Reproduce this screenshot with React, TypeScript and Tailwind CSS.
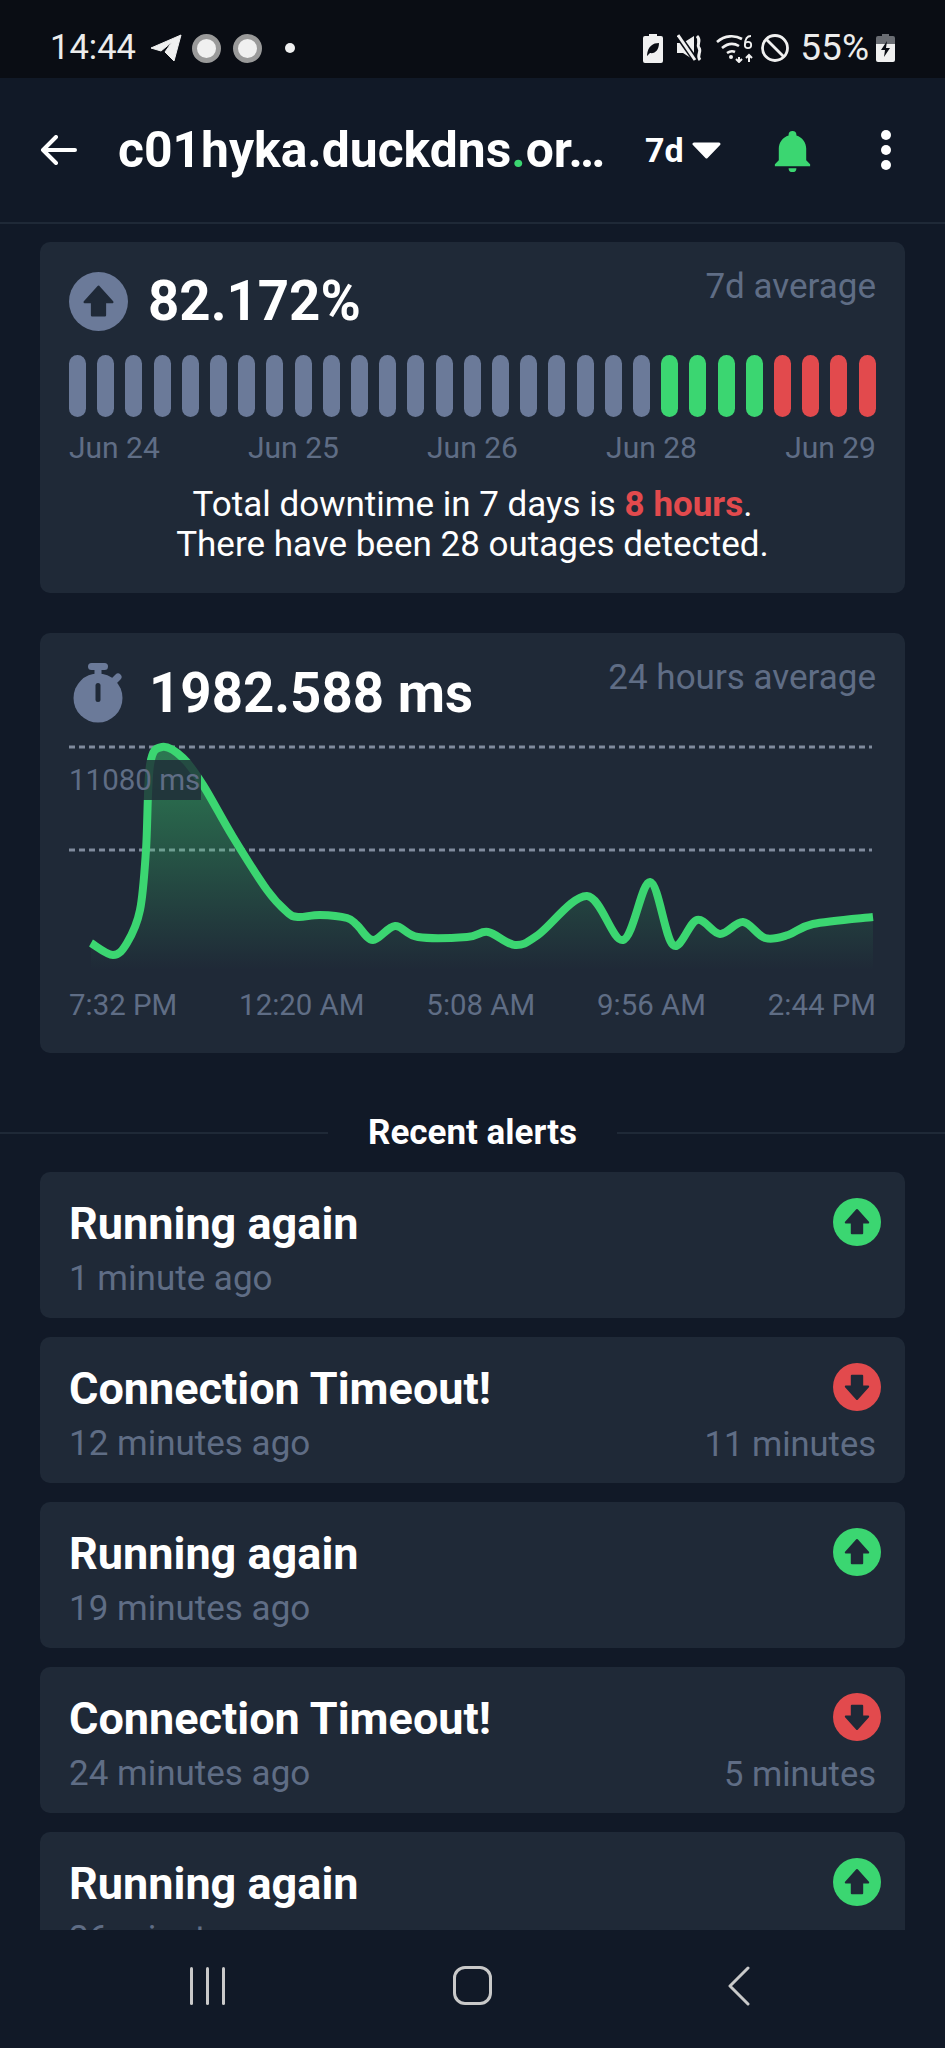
import React from 'react';

const GREEN = '#3bd671';
const RED = '#e24a4d';

// points traced from the reference, relative to the chart box
const points: [number, number][] = [
  [91, 943], [113, 955], [127, 943], [140, 910], [146, 850], [150, 765], [162, 747], [183, 758],
  [203, 785], [233, 837], [267, 890], [287, 912], [298, 917], [320, 915], [347, 918], [357, 925],
  [373, 940], [395, 926], [418, 937], [467, 937], [488, 932], [515, 945], [538, 935], [587, 896],
  [623, 940], [650, 882], [673, 945], [697, 920], [720, 934], [743, 922], [765, 938], [788, 935],
  [813, 924], [873, 917],
].map(([x, y]) => [x - 69, y - 740] as [number, number]);

const buildLine = (pts: [number, number][]) => {
  let d = `M${pts[0][0]} ${pts[0][1]}`;
  for (let i = 0; i < pts.length - 1; i++) {
    const p0 = pts[Math.max(i - 1, 0)];
    const p1 = pts[i];
    const p2 = pts[i + 1];
    const p3 = pts[Math.min(i + 2, pts.length - 1)];
    const c1x = p1[0] + (p2[0] - p0[0]) / 6;
    const c1y = p1[1] + (p2[1] - p0[1]) / 6;
    const c2x = p2[0] - (p3[0] - p1[0]) / 6;
    const c2y = p2[1] - (p3[1] - p1[1]) / 6;
    d += ` C${c1x} ${c1y} ${c2x} ${c2y} ${p2[0]} ${p2[1]}`;
  }
  return d;
};

const linePath = buildLine(points);
const areaPath = `${linePath} L804 230 L22 230 Z`;

const bars = [
  ...Array(21).fill('bg-[#6b7a99]'),
  ...Array(4).fill('bg-[#3bd671]'),
  ...Array(4).fill('bg-[#e24a4d]'),
];

const alerts = [
  { title: 'Running again', ago: '1 minute ago', up: true, length: '' },
  { title: 'Connection Timeout!', ago: '12 minutes ago', up: false, length: '11 minutes' },
  { title: 'Running again', ago: '19 minutes ago', up: true, length: '' },
  { title: 'Connection Timeout!', ago: '24 minutes ago', up: false, length: '5 minutes' },
  { title: 'Running again', ago: '26 minutes ago', up: true, length: '' },
];

const ArrowBadge: React.FC<{ up: boolean; color: string; size: string }> = ({ up, color, size }) => (
  <svg viewBox="0 0 24 24" className={size}>
    <circle cx="12" cy="12" r="12" fill={color} />
    <path
      d={up ? 'M12 6 L17.6 12.2 H14.6 V17.6 H9.4 V12.2 H6.4 Z' : 'M12 18 L17.6 11.8 H14.6 V6.4 H9.4 V11.8 H6.4 Z'}
      fill="#1f2937"
      stroke="#1f2937"
      strokeWidth="1"
      strokeLinejoin="round"
    />
  </svg>
);

const StatusBar = () => (
  <div className="h-[78px] bg-[#0a0d14] flex items-center justify-between pl-[50px] pr-[50px] pt-[18px] text-[#ececec] font-normal">
    <div className="flex items-center">
      <span className="text-[34.5px]">14:44</span>
      <svg viewBox="0 0 32 28" className="w-[32px] h-[28px] ml-[14px]">
        <path d="M1 14 L31 1 L24 27 L15 18 L22 8 L11 17 Z" fill="#f0f0f0" stroke="#f0f0f0" strokeLinejoin="round" />
      </svg>
      <span className="w-[29px] h-[29px] rounded-full bg-[#f0f0f0] border-[5px] border-[#9a9a9a] ml-[10px]" />
      <span className="w-[29px] h-[29px] rounded-full bg-[#f0f0f0] border-[5px] border-[#9a9a9a] ml-[12px]" />
      <span className="w-[10px] h-[10px] rounded-full bg-[#f0f0f0] ml-[23px]" />
    </div>
    <div className="flex items-center">
      <svg viewBox="0 0 20 29" className="w-[20px] h-[29px]">
        <path d="M6 0 H14 V2 H18 A2 2 0 0 1 20 4 V27 A2 2 0 0 1 18 29 H2 A2 2 0 0 1 0 27 V4 A2 2 0 0 1 2 2 H6 Z" fill="#f0f0f0" />
        <path d="M4 21 C5 12 10 9 16 9 C16 16 12 20 7 19 L4 22 Z" fill="#0a0d14" />
      </svg>
      <svg viewBox="0 0 26 28" className="w-[26px] h-[28px] ml-[14px]">
        <path d="M0 9 H6 L17 2 V26 L6 19 H0 Z" fill="#f0f0f0" />
        <path d="M0 0 L19 27" stroke="#0a0d14" strokeWidth="6" />
        <path d="M1 1 L18 26" stroke="#f0f0f0" strokeWidth="3" />
        <path d="M20 2 C25 7 19 10 22 14 C25 18 19 21 23 26" stroke="#f0f0f0" strokeWidth="3" fill="none" />
      </svg>
      <svg viewBox="0 0 39 30" className="w-[39px] h-[30px] ml-[13px]">
        <path d="M1 9 C9 2 19 2 26 6 M6 15 C12 10 18 10 23 13 M11 20 C14 18 17 18 19 19" stroke="#f0f0f0" strokeWidth="2.6" fill="none" />
        <circle cx="15" cy="24" r="2" fill="#f0f0f0" />
        <path d="M23 24 V29 M20 26 L23 29 L26 26 M33 29 V22 M30 25 L33 22 L36 25" stroke="#f0f0f0" strokeWidth="2" fill="none" />
        <circle cx="32" cy="12" r="3.2" stroke="#f0f0f0" strokeWidth="1.8" fill="none" />
        <path d="M35 3 C31 3 29 6 29 12" stroke="#f0f0f0" strokeWidth="1.8" fill="none" />
      </svg>
      <svg viewBox="0 0 28 28" className="w-[28px] h-[28px] ml-[6px]">
        <circle cx="14" cy="14" r="12.5" stroke="#f0f0f0" strokeWidth="2.8" fill="none" />
        <path d="M5 5 L23 23" stroke="#f0f0f0" strokeWidth="2.8" />
      </svg>
      <span className="ml-[11px] text-[37px]">55%</span>
      <svg viewBox="0 0 19 28" className="w-[19px] h-[28px] ml-[7px]">
        <path d="M6 0 H13 V2 H17 A2 2 0 0 1 19 4 V10 H0 V4 A2 2 0 0 1 2 2 H6 Z" fill="#6a6d73" />
        <path d="M0 10 H19 V26 A2 2 0 0 1 17 28 H2 A2 2 0 0 1 0 26 Z" fill="#f0f0f0" />
        <path d="M11 7 L5 16 H9 L8 23 L14 14 H10 Z" fill="#0a0d14" />
      </svg>
    </div>
  </div>
);

const Header = () => (
  <div className="h-[146px] bg-[#111927] border-b-2 border-[#1f2937] flex items-center pl-[40px] text-white">
    <svg viewBox="0 0 37 30" className="w-[37px] h-[30px] shrink-0">
      <path d="M35 15 H3 M16 2 L3 15 L16 28" stroke="#fff" strokeWidth="4" strokeLinecap="round" strokeLinejoin="round" fill="none" />
    </svg>
    <div className="ml-[41px] w-[490px] shrink-0 text-[49.8px] font-bold whitespace-nowrap overflow-hidden">
      c01hyka.duckdns<span className="text-[#3bd671]">.</span>or…
    </div>
    <div className="ml-[37px] text-[34px] font-bold w-[38px]">7d</div>
    <svg viewBox="0 0 29 17" className="w-[29px] h-[17px] ml-[9px]">
      <path d="M2 2 H27 L14.5 15 Z" fill="#fff" stroke="#fff" strokeWidth="3" strokeLinejoin="round" />
    </svg>
    <svg viewBox="0 0 24 24" className="w-[47px] h-[47px] ml-[48px]">
      <path
        d="M21,19V20H3V19L5,17V11C5,7.9 7.03,5.17 10,4.29C10,4.19 10,4.1 10,4A2,2 0 0,1 12,2A2,2 0 0,1 14,4C14,4.1 14,4.19 14,4.29C16.97,5.17 19,7.9 19,11V17L21,19M14,21A2,2 0 0,1 12,23A2,2 0 0,1 10,21"
        fill={GREEN}
      />
    </svg>
    <div className="ml-[65px] flex flex-col gap-[5px]">
      <span className="w-[10px] h-[10px] rounded-full bg-white" />
      <span className="w-[10px] h-[10px] rounded-full bg-white" />
      <span className="w-[10px] h-[10px] rounded-full bg-white" />
    </div>
  </div>
);

const UptimeCard = () => (
  <div className="h-[351px] bg-[#1f2937] rounded-[10px] px-[29px] pt-[30px]">
    <div className="flex justify-between items-start h-[59px]">
      <div className="flex items-center">
        <ArrowBadge up color="#6b7a99" size="w-[59px] h-[59px]" />
        <span className="ml-[20px] text-[54.6px] font-bold text-white leading-[59px]">82.172%</span>
      </div>
      <span className="text-[#5f6d85] text-[35px] leading-[32px] -mt-[1px]">7d average</span>
    </div>
    <div className="flex justify-between mt-[24px]">
      {bars.map((bar, i) => (
        <div key={i} className={`w-[17px] h-[62px] rounded-full ${bar}`} />
      ))}
    </div>
    <div className="flex justify-between mt-[14px] text-[#5f6d85] text-[30px] leading-[34px]">
      <span>Jun 24</span>
      <span>Jun 25</span>
      <span>Jun 26</span>
      <span>Jun 28</span>
      <span>Jun 29</span>
    </div>
    <div className="mt-[20px] text-center text-white text-[35px] leading-[40px]">
      <div>
        Total downtime in 7 days is <span className="text-[#e24a4d] font-bold">8 hours</span>.
      </div>
      <div>There have been 28 outages detected.</div>
    </div>
  </div>
);

const ResponseCard = () => (
  <div className="h-[420px] bg-[#1f2937] rounded-[10px] px-[29px] pt-[30px] mt-[40px]">
    <div className="flex justify-between items-start h-[59px]">
      <div className="flex items-center">
        <svg viewBox="0 0 54 60" className="w-[54px] h-[60px] ml-[3px]">
          <rect x="16" y="0" width="20" height="7" rx="3.5" fill="#6b7a99" />
          <rect x="22.5" y="4" width="7" height="10" fill="#6b7a99" />
          <path d="M42 18 L46 14" stroke="#6b7a99" strokeWidth="7" strokeLinecap="round" />
          <circle cx="26" cy="35" r="24.5" fill="#6b7a99" />
          <rect x="23.5" y="20" width="5" height="19" rx="2.5" fill="#1f2937" />
        </svg>
        <span className="ml-[23px] text-[54.6px] font-bold text-white leading-[59px]">1982.588 ms</span>
      </div>
      <span className="text-[#5f6d85] text-[35px] leading-[32px] -mt-[1px]">24 hours average</span>
    </div>
    <div className="relative h-[230px] mt-[18px]">
      <svg viewBox="0 0 807 230" className="w-[807px] h-[230px] block">
        <defs>
          <linearGradient id="latencyFill" x1="0" y1="20" x2="0" y2="230" gradientUnits="userSpaceOnUse">
            <stop offset="0" stopColor={GREEN} stopOpacity="0.45" />
            <stop offset="1" stopColor={GREEN} stopOpacity="0" />
          </linearGradient>
        </defs>
        <line x1="0" y1="7" x2="803" y2="7" stroke="#7f8a9c" strokeWidth="3" strokeDasharray="6 4" />
        <line x1="0" y1="110" x2="803" y2="110" stroke="#7f8a9c" strokeWidth="3" strokeDasharray="6 4" />
        <path d={areaPath} fill="url(#latencyFill)" />
        <path d={linePath} fill="none" stroke={GREEN} strokeWidth="8" strokeLinecap="butt" strokeLinejoin="round" />
      </svg>
      <div className="absolute left-0 top-[20px] h-[40px] w-[132px] bg-[#1f2937]/80 text-[#5f6d85] text-[29.5px] leading-[40px] whitespace-nowrap">
        11080 ms
      </div>
    </div>
    <div className="flex justify-between mt-[17px] text-[#5f6d85] text-[29.4px] leading-[36px]">
      <span>7:32 PM</span>
      <span>12:20 AM</span>
      <span>5:08 AM</span>
      <span>9:56 AM</span>
      <span>2:44 PM</span>
    </div>
  </div>
);

const AlertRow: React.FC<{ title: string; ago: string; up: boolean; length: string }> = ({ title, ago, up, length }) => (
  <div className="h-[146px] shrink-0 bg-[#1f2937] rounded-[10px] pl-[29px] pr-[29px] pt-[26px] flex justify-between">
    <div>
      <div className="text-white text-[45px] font-bold leading-[52px]">{title}</div>
      <div className="text-[#5f6d85] text-[35px] leading-[40px] mt-[9px]">{ago}</div>
    </div>
    <div className="flex flex-col items-end">
      <div className="-mr-[5px]">
        <ArrowBadge up={up} color={up ? GREEN : RED} size="w-[48px] h-[48px]" />
      </div>
      {length && <div className="text-[#5f6d85] text-[34.5px] leading-[40px] mt-[13px]">{length}</div>}
    </div>
  </div>
);

const NavBar = () => (
  <div className="h-[118px] bg-[#111927] flex items-start pt-[36px] pl-[190px]">
    <div className="flex gap-[13px] mt-[1px]">
      <span className="w-[3px] h-[38px] bg-[#c9c9c9] rounded-full" />
      <span className="w-[3px] h-[38px] bg-[#c9c9c9] rounded-full" />
      <span className="w-[3px] h-[38px] bg-[#c9c9c9] rounded-full" />
    </div>
    <div className="w-[39px] h-[39px] ml-[228px] border-[3px] border-[#c9c9c9] rounded-[12px]" />
    <svg viewBox="0 0 23 40" className="w-[23px] h-[40px] ml-[235px]">
      <path d="M21 2 L3 20 L21 38" stroke="#c9c9c9" strokeWidth="3" strokeLinecap="round" strokeLinejoin="round" fill="none" />
    </svg>
  </div>
);

const App: React.FC = () => {
  return (
    <div className="w-[945px] h-[2048px] bg-[#111927] overflow-hidden flex flex-col font-['Roboto',sans-serif]">
      <StatusBar />
      <Header />
      <div className="h-[1706px] overflow-hidden">
        <div className="px-[40px] pt-[18px]">
          <UptimeCard />
          <ResponseCard />
        </div>
        <div className="flex items-center h-[78px] mt-[41px]">
          <div className="w-[328px] h-[2px] bg-[#1f2937]" />
          <div className="flex-1 text-center text-white text-[35px] font-bold">Recent alerts</div>
          <div className="w-[328px] h-[2px] bg-[#1f2937]" />
        </div>
        <div className="flex flex-col gap-[19px] px-[40px]">
          {alerts.map((alert, i) => (
            <AlertRow key={i} {...alert} />
          ))}
        </div>
      </div>
      <NavBar />
    </div>
  );
};

export default App;
